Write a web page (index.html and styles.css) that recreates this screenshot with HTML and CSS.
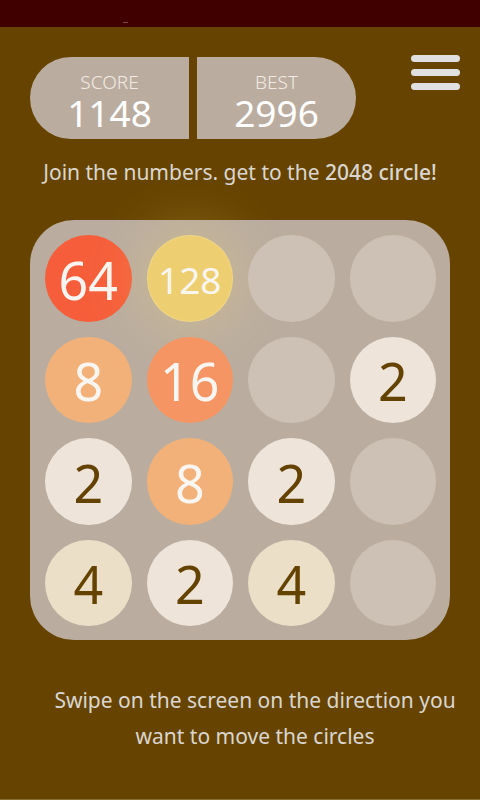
FILE: index.html
```html
<!DOCTYPE html>
<html lang="en">
<head>
<meta charset="utf-8">
<meta name="viewport" content="width=device-width, initial-scale=1">
<title>2048 Circle</title>
<link rel="stylesheet" href="styles.css">
</head>
<body>
<div class="status"><span class="status-mark"></span></div>
<main class="game">
  <header class="top">
    <div class="scores">
      <div class="score score-left"><span class="label">SCORE</span><span class="value">1148</span></div>
      <div class="score score-right"><span class="label">BEST</span><span class="value">2996</span></div>
    </div>
    <button class="menu" type="button" aria-label="Menu"><span></span><span></span><span></span></button>
  </header>
  <p class="intro">Join the numbers. get to the <strong>2048 circle!</strong></p>
  <section class="board" aria-label="Board">
    <div class="tile t64">64</div>
    <div class="tile t128">128</div>
    <div class="tile"></div>
    <div class="tile"></div>
    <div class="tile t8">8</div>
    <div class="tile t16">16</div>
    <div class="tile"></div>
    <div class="tile t2">2</div>
    <div class="tile t2">2</div>
    <div class="tile t8">8</div>
    <div class="tile t2">2</div>
    <div class="tile"></div>
    <div class="tile t4">4</div>
    <div class="tile t2">2</div>
    <div class="tile t4">4</div>
    <div class="tile"></div>
  </section>
  <p class="hint">Swipe on the screen on the direction you want to move the circles</p>
</main>
</body>
</html>
```

FILE: styles.css
```css
* {
  box-sizing: border-box;
}

body {
  margin: 0;
  min-height: 100vh;
  display: flex;
  flex-direction: column;
  background: #664400;
  border-bottom: 1px solid #87702f;
  color: #dad6cf;
  font-family: "Noto Sans", "Open Sans", sans-serif;
}

.status {
  display: flex;
  align-items: flex-end;
  height: 27px;
  padding: 0 0 4px 123px;
  background: #400000;
}

.status-mark {
  width: 5px;
  height: 1px;
  background: #7c4a48;
}

.game {
  padding: 30px 30px 0;
}

.top {
  display: flex;
  justify-content: space-between;
  align-items: flex-start;
  margin-right: -10px;
}

.scores {
  display: flex;
  gap: 8px;
}

.score {
  display: flex;
  flex-direction: column;
  align-items: center;
  width: 159px;
  height: 82px;
  padding-top: 14px;
  background: #baada0;
}

.score-left {
  border-radius: 41px 0 0 41px;
}

.score-right {
  border-radius: 0 41px 41px 0;
}

.label {
  font-size: 19px;
  line-height: 22px;
  font-weight: 300;
  color: #f2eae2;
}

.value {
  font-size: 37px;
  line-height: 40px;
  color: #fff;
}

.menu {
  display: flex;
  flex-direction: column;
  gap: 7px;
  width: 49px;
  margin-top: -2px;
  padding: 0;
  border: 0;
  background: none;
}

.menu span {
  height: 7px;
  border-radius: 4px;
  background: #e0e0e0;
}

.intro {
  margin: 15px -10px 0;
  text-align: center;
  white-space: nowrap;
  font-size: 21px;
  line-height: 36px;
}

.intro strong {
  font-weight: 500;
}

.board {
  display: grid;
  grid-template-columns: repeat(4, 1fr);
  gap: 15px;
  margin-top: 30px;
  padding: 15px 14px 14px 15px;
  border-radius: 44px;
  background: #baada0;
}

.tile {
  display: flex;
  align-items: center;
  justify-content: center;
  aspect-ratio: 1;
  padding-top: 3px;
  border-radius: 50%;
  background: #cdc1b5;
  color: #f9f6f2;
  font-size: 52px;
  line-height: 60px;
}

.t2 {
  background: #eee4da;
  color: #644200;
}

.t4 {
  background: #ebdfc7;
  color: #644200;
}

.t8 {
  background: #f2b179;
}

.t16 {
  background: #f59563;
}

.t64 {
  background: #f65e3b;
}

.t128 {
  background: #edcf72;
  font-size: 37px;
  box-shadow: 0 0 60px 8px rgba(243, 215, 116, 0.3), inset 0 0 0 1px rgba(255, 255, 255, 0.15);
}

.hint {
  margin: 42px -10px 0 20px;
  text-align: center;
  font-size: 21px;
  line-height: 36px;
}
```
